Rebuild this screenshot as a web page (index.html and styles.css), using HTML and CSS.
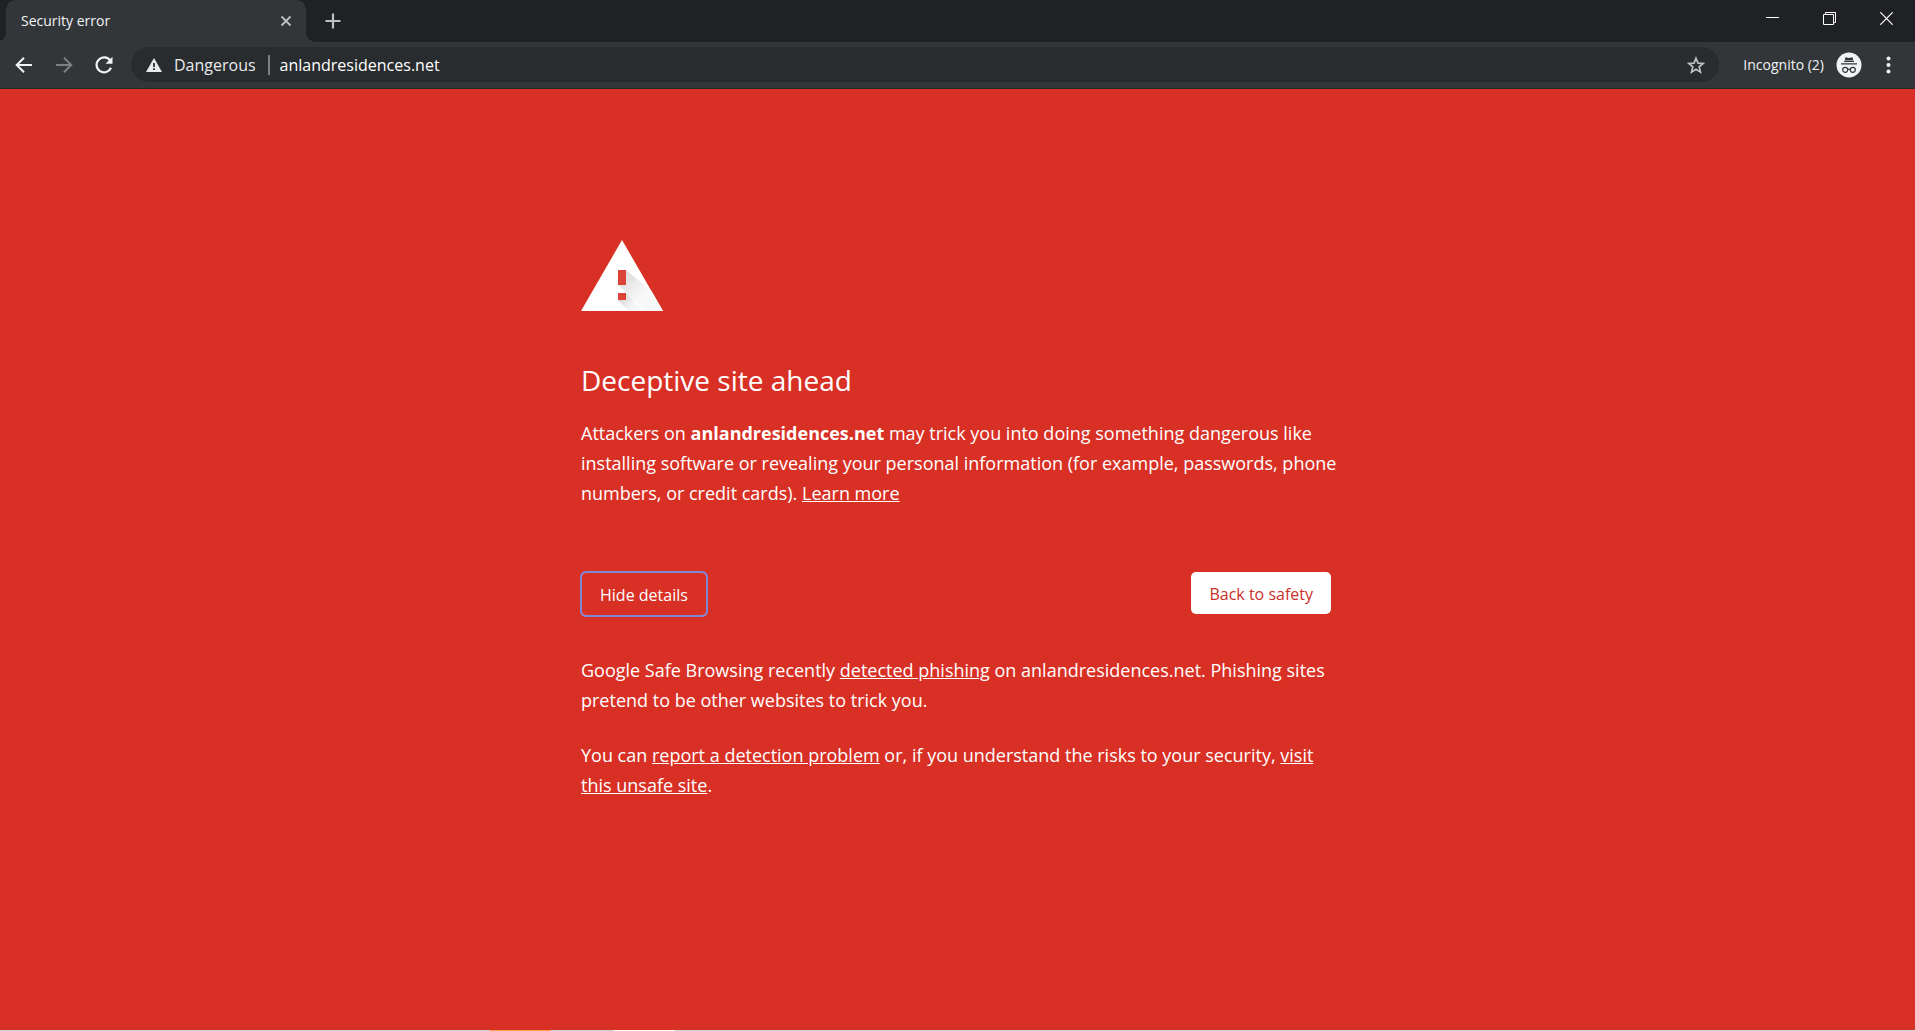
FILE: index.html
```
<!DOCTYPE html>
<html lang="en">
<head>
  <meta charset="utf-8">
  <title>Security error</title>
  <link rel="stylesheet" href="styles.css">
</head>
<body>
  <header class="browser">
    <div class="tab-strip">
      <div class="tab">
        <span class="tab-title">Security error</span>
        <button class="icon-button tab-close" aria-label="Close tab">
          <svg width="12" height="12" viewBox="0 0 12 12"><path d="M1.5 1.5l9 9M10.500 1.500l-9 9" stroke="#bdc1c6" stroke-width="1.8"/></svg>
        </button>
      </div>
      <button class="icon-button new-tab" aria-label="New tab">
        <svg width="16" height="16" viewBox="0 0 16 16"><path d="M8 .5v15M.5 8h15" stroke="#bdc1c6" stroke-width="2.200"/></svg>
      </button>
      <div class="window-controls">
        <button class="icon-button" aria-label="Minimize">
          <svg width="13" height="13" viewBox="0 0 13 13"><path d="M0 5.5h13" stroke="#fff"/></svg>
        </button>
        <button class="icon-button" aria-label="Restore">
          <svg width="13" height="13" viewBox="0 0 13 13" fill="none" stroke="#fff"><path d="M.5 2.500h10v10H.500zM2.500 2.500v-2h10v10h-2"/></svg>
        </button>
        <button class="icon-button" aria-label="Close">
          <svg width="13" height="13" viewBox="0 0 13 13"><path d="M.3.3l12.400 12.400M12.700.3L.3 12.700" stroke="#fff" stroke-width="1.200"/></svg>
        </button>
      </div>
    </div>

    <div class="toolbar">
      <nav class="nav-buttons">
        <button class="icon-button" aria-label="Back">
          <svg width="18" height="18" viewBox="0 0 18 18" fill="none" stroke="#f1f3f4" stroke-width="2"><path d="M17 9H2.500M9 1.700L1.700 9 9 16.300"/></svg>
        </button>
        <button class="icon-button" aria-label="Forward" disabled>
          <svg width="18" height="18" viewBox="0 0 18 18" fill="none" stroke="#7d8083" stroke-width="2"><path d="M1 9h14.500M9 1.700L16.300 9 9 16.300"/></svg>
        </button>
        <button class="icon-button" aria-label="Reload">
          <svg width="18" height="18" viewBox="0 0 18 18"><path d="M15.200 4.500A7.500 7.500 0 1 0 16 11.800" fill="none" stroke="#f1f3f4" stroke-width="2.200"/><path d="M17.500.8v7h-7z" fill="#f1f3f4"/></svg>
        </button>
      </nav>
      <div class="omnibox">
        <svg width="16" height="14" viewBox="0 0 16 14"><path d="M8 0l8 14H0z" fill="#e8eaed"/><path d="M7.100 5h1.800v4H7.100zM7.100 10.300h1.800V12H7.100z" fill="#282c2f"/></svg>
        <span class="security-label">Dangerous</span>
        <input class="url" type="text" value="anlandresidences.net" aria-label="Address">
        <button class="icon-button" aria-label="Bookmark this page">
          <svg width="18" height="18" viewBox="0 0 18 18"><path d="M9 2.200l2 4.900 5.200.4-4 3.400 1.300 5.200L9 13.300l-4.500 2.800 1.300-5.200-4-3.400 5.200-.4z" fill="none" stroke="#bdc1c6" stroke-width="1.700"/></svg>
        </button>
      </div>
      <button class="profile">
        <span>Incognito (2)</span>
        <svg width="26" height="26" viewBox="0 0 26 26">
          <circle cx="13" cy="13" r="12.500" fill="#f1f3f4"/>
          <path d="M9.500 5.200l3.500.7 3.500-.7.8 3.300H8.700z" fill="#323639"/>
          <path d="M8 9h10v1H8zM5 11.200h16v1.300H5z" fill="#323639"/>
          <g fill="none" stroke="#323639" stroke-width="1.200"><circle cx="9.200" cy="17.800" r="2.500"/><circle cx="16.800" cy="17.800" r="2.500"/><path d="M11.700 17.500q1.300-.8 2.600 0"/></g>
        </svg>
      </button>
      <button class="icon-button" aria-label="Menu">
        <svg width="5" height="18" viewBox="0 0 5 18" fill="#f1f3f4"><circle cx="2.500" cy="2.500" r="2"/><circle cx="2.500" cy="9" r="2"/><circle cx="2.500" cy="15.500" r="2"/></svg>
      </button>
    </div>
  </header>

  <main class="warning">
    <div class="interstitial">
      <svg class="warning-icon" width="82" height="71" viewBox="0 0 82 71">
        <defs>
          <linearGradient id="shade" gradientUnits="userSpaceOnUse" x1="38" y1="34" x2="60" y2="56">
            <stop offset="0" stop-color="#d8d8d8"/>
            <stop offset="1" stop-color="#f8f8f8"/>
          </linearGradient>
          <linearGradient id="shade-dot" gradientUnits="userSpaceOnUse" x1="40" y1="56" x2="51" y2="67">
            <stop offset="0" stop-color="#d4d4d4"/>
            <stop offset="1" stop-color="#f8f8f8"/>
          </linearGradient>
        </defs>
        <path d="M41 0l41 71H0z" fill="#fff"/>
        <path d="M45 30l25.500 21L82 71H65L37 45z" fill="url(#shade)"/>
        <path d="M45 53l18 18H47.500L37 60.500z" fill="url(#shade-dot)"/>
        <path d="M37 30h8v15h-8zM37 53h8v7h-8z" fill="#db4437"/>
      </svg>
      <h1>Deceptive site ahead</h1>
      <p>Attackers on <strong>anlandresidences.net</strong> may trick you into doing something dangerous like installing software or revealing your personal information (for example, passwords, phone numbers, or credit cards). <a href="#">Learn more</a></p>
      <div class="actions">
        <button class="details-button">Hide details</button>
        <button class="safety-button">Back to safety</button>
      </div>
      <div class="details">
        <p>Google Safe Browsing recently <a href="#">detected phishing</a> on anlandresidences.net. Phishing sites pretend to be other websites to trick you.</p>
        <p>You can <a href="#">report a detection problem</a> or, if you understand the risks to your security, <a href="#">visit this unsafe site</a>.</p>
      </div>
    </div>
  </main>
  <div class="screen-edge"></div>
</body>
</html>
```
FILE: styles.css
```
* {
  box-sizing: border-box;
}

body {
  margin: 0;
  min-height: 100vh;
  display: flex;
  flex-direction: column;
  background: #d93025;
  color: #fff;
  font-family: "Segoe UI", "Open Sans", "Noto Sans", sans-serif;
}

button {
  font-family: inherit;
  cursor: pointer;
}

svg {
  display: block;
  flex: none;
}

/* Browser frame */
.browser {
  background: #202124;
}

.tab-strip {
  display: flex;
  height: 42px;
  padding-left: 6px;
}

.tab {
  position: relative;
  display: flex;
  align-items: center;
  justify-content: space-between;
  width: 300px;
  padding: 0 14px 0 15px;
  background: #323639;
  border-radius: 10px 10px 0 0;
}

/* curved feet of the tab */
.tab::before,
.tab::after {
  content: "";
  position: absolute;
  bottom: 0;
  width: 10px;
  height: 10px;
}

.tab::before {
  right: 100%;
  background: radial-gradient(circle at 0 0, transparent 10px, #323639 10px);
}

.tab::after {
  left: 100%;
  background: radial-gradient(circle at 100% 0, transparent 10px, #323639 10px);
}

.tab-title {
  font-size: 14px;
  line-height: 20px;
  color: #f1f3f4;
}

.icon-button {
  display: flex;
  align-items: center;
  justify-content: center;
  padding: 0;
  border: none;
  background: none;
}

.new-tab {
  margin-left: 19px;
}

.window-controls {
  display: flex;
  margin-left: auto;
}

.window-controls .icon-button {
  width: 57px;
  height: 37px;
}

.toolbar {
  display: flex;
  align-items: center;
  height: 47px;
  padding: 0 24px 1px 15px;
  background: #323639;
  border-bottom: 1px solid #26292b;
}

.nav-buttons {
  display: flex;
  gap: 22px;
}

.omnibox {
  display: flex;
  align-items: center;
  flex: 1;
  height: 35px;
  margin-left: 18px;
  padding: 0 14px 0 15px;
  border-radius: 18px;
  background: #282c2f;
}

.security-label {
  margin-left: 12px;
  padding-right: 12px;
  border-right: 2px solid #7d8083;
  font-size: 16px;
  line-height: 20px;
  color: #e8eaed;
}

.url {
  flex: 1;
  min-width: 0;
  padding: 0 0 0 10px;
  border: none;
  outline: none;
  background: none;
  font-family: inherit;
  font-size: 16px;
  color: #fff;
}

.profile {
  display: flex;
  align-items: center;
  gap: 12px;
  margin: 0 24px;
  padding: 0;
  border: none;
  background: none;
  font-size: 14px;
  color: #f1f3f4;
}

/* Warning page */
.warning {
  flex: 1;
  padding: 151px 3px 40px 0;
}

.interstitial {
  max-width: 750px;
  margin: 0 auto;
  font-size: 18px;
  line-height: 30px;
}

.interstitial h1 {
  margin: 50px 0 19px;
  font-size: 28px;
  font-weight: 400;
  line-height: 38px;
}

.interstitial p {
  margin: 0 -10px 0 0;
}

.interstitial a {
  color: inherit;
}

.actions {
  display: flex;
  justify-content: space-between;
  align-items: flex-start;
  margin-top: 64px;
}

.actions button {
  height: 42px;
  padding: 2px 18px 0;
  border: none;
  border-radius: 5px;
  font-size: 16px;
}

.actions .details-button {
  height: 44px;
  border: 1px solid #e8a09a;
  outline: 2px solid #7b88d8;
  outline-offset: -1px;
  background: none;
  color: #fff;
}

.actions .safety-button {
  background: #fff;
  color: #c9302a;
}

.details {
  margin-top: 39px;
}

.details p + p {
  margin-top: 25px;
}

/* sliver of the taskbar under the window */
.screen-edge {
  height: 1px;
  background: linear-gradient(to right, #c5d3dc 490px, #f5a04c 490px 551px, #c5d3dc 551px 614px, #fff 614px 675px, #c5d3dc 675px);
}
```
